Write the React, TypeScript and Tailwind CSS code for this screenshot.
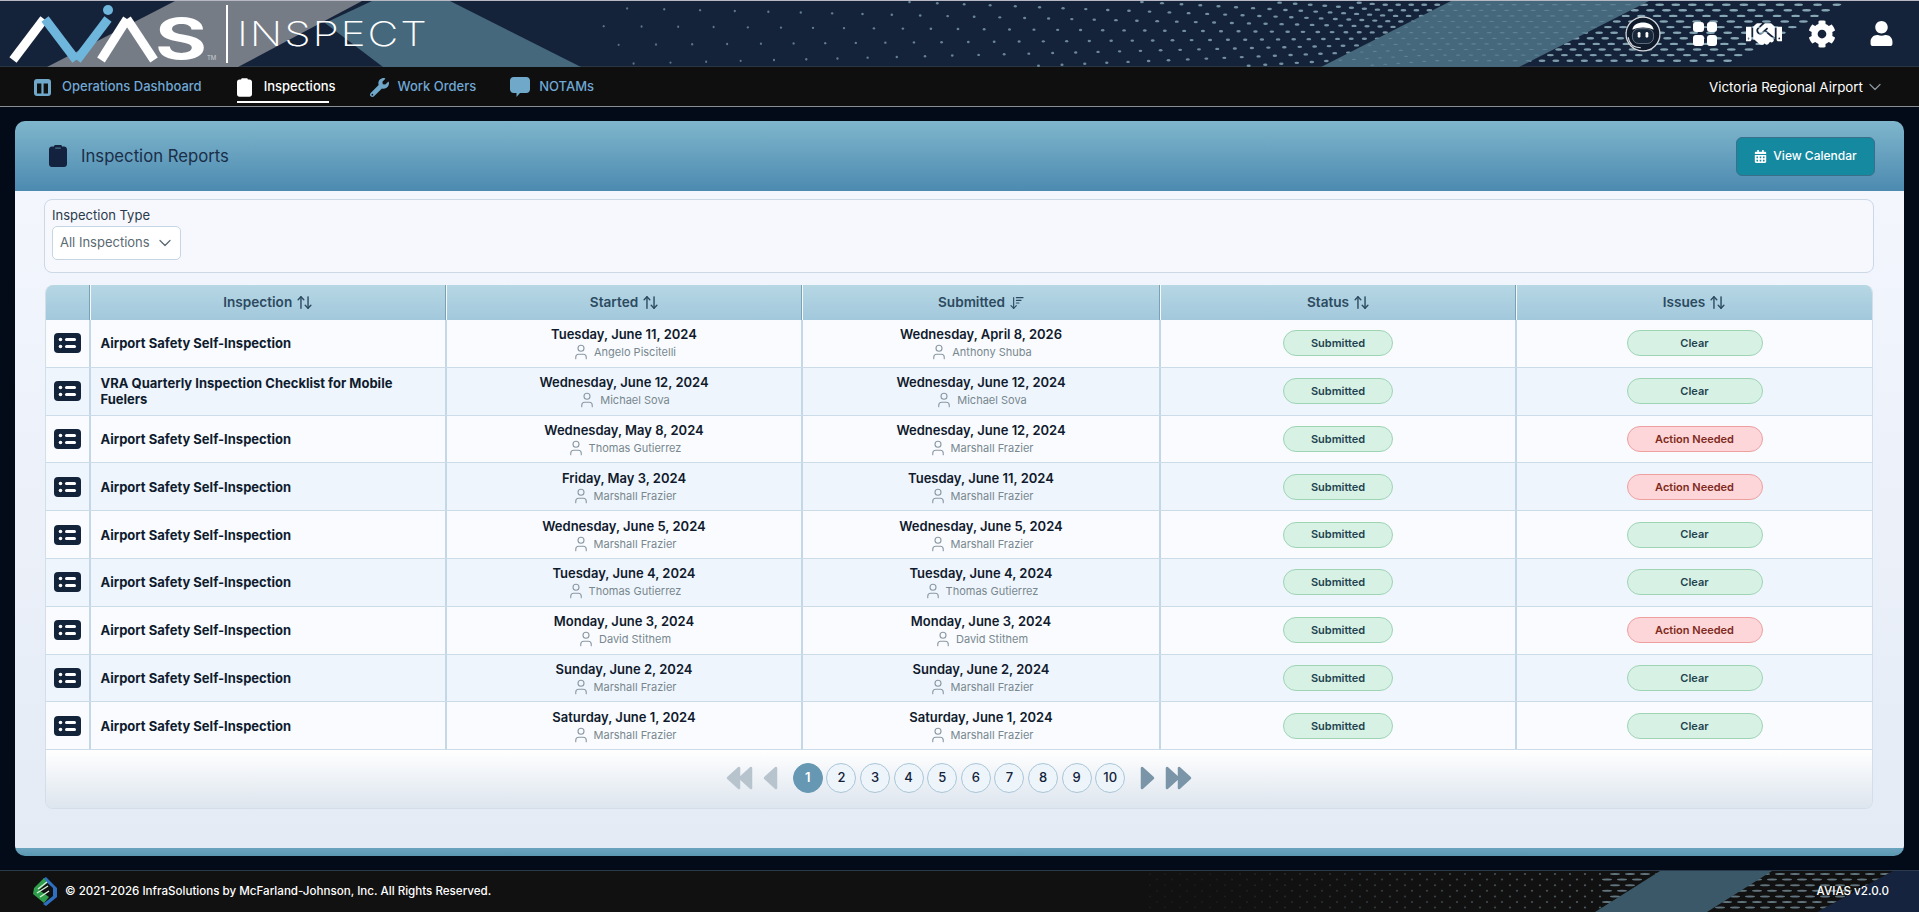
import { ArrowDownWideNarrow, ArrowUpDown, ChevronDown, User } from 'lucide-react';
import { FaCalendarAlt, FaCog, FaHandshake, FaUser, FaWrench } from 'react-icons/fa';

const rows = [
  { title: 'Airport Safety Self-Inspection', started: 'Tuesday, June 11, 2024', startedBy: 'Angelo Piscitelli', submitted: 'Wednesday, April 8, 2026', submittedBy: 'Anthony Shuba', clear: true },
  { title: 'VRA Quarterly Inspection Checklist for Mobile Fuelers', started: 'Wednesday, June 12, 2024', startedBy: 'Michael Sova', submitted: 'Wednesday, June 12, 2024', submittedBy: 'Michael Sova', clear: true },
  { title: 'Airport Safety Self-Inspection', started: 'Wednesday, May 8, 2024', startedBy: 'Thomas Gutierrez', submitted: 'Wednesday, June 12, 2024', submittedBy: 'Marshall Frazier', clear: false },
  { title: 'Airport Safety Self-Inspection', started: 'Friday, May 3, 2024', startedBy: 'Marshall Frazier', submitted: 'Tuesday, June 11, 2024', submittedBy: 'Marshall Frazier', clear: false },
  { title: 'Airport Safety Self-Inspection', started: 'Wednesday, June 5, 2024', startedBy: 'Marshall Frazier', submitted: 'Wednesday, June 5, 2024', submittedBy: 'Marshall Frazier', clear: true },
  { title: 'Airport Safety Self-Inspection', started: 'Tuesday, June 4, 2024', startedBy: 'Thomas Gutierrez', submitted: 'Tuesday, June 4, 2024', submittedBy: 'Thomas Gutierrez', clear: true },
  { title: 'Airport Safety Self-Inspection', started: 'Monday, June 3, 2024', startedBy: 'David Stithem', submitted: 'Monday, June 3, 2024', submittedBy: 'David Stithem', clear: false },
  { title: 'Airport Safety Self-Inspection', started: 'Sunday, June 2, 2024', startedBy: 'Marshall Frazier', submitted: 'Sunday, June 2, 2024', submittedBy: 'Marshall Frazier', clear: true },
  { title: 'Airport Safety Self-Inspection', started: 'Saturday, June 1, 2024', startedBy: 'Marshall Frazier', submitted: 'Saturday, June 1, 2024', submittedBy: 'Marshall Frazier', clear: true },
];

// lattice of dots in the header art, tighter and longer towards the right
const headerDots: { x: number; y: number; rx: number; o: number }[] = [];
let colX = 540;
while (colX < 1900) {
  const sp = Math.max(5.6, 19 - (colX - 600) * 0.0165);
  const step = Math.max(13, 38 - (colX - 600) * 0.033) + Math.max(0, colX - 1500) * 0.02;
  for (let r = -7; r <= 6; r++) {
    const y = 34.5 + (r + 0.5) * sp;
    if (y > 1 && y < 65) {
      const t = Math.min(1, Math.max(0, (colX - 600) / 1100));
      headerDots.push({ x: colX + r * step * 0.4, y, rx: 1 + t * t * 3.4, o: 0.6 + t * 0.4 });
    }
  }
  colX += step;
}

const footerDots: { x: number; y: number }[] = [];
for (let x = 1150; x < 1900; x += 15) {
  for (let r = 0; r < 8; r++) {
    footerDots.push({ x: x + (r % 2 ? 7 : 0), y: 3 + r * 5.6 });
  }
}

function HeaderArt() {
  return (
    <svg className="absolute inset-0" width="1919" height="66" viewBox="0 0 1919 66">
      <defs>
        <clipPath id="dots-right">
          <polygon points="600,0 1849,0 1721,66 600,66" />
        </clipPath>
        <clipPath id="dots-band">
          <polygon points="1451,0 1649,0 1519,66 1321,66" />
        </clipPath>
      </defs>
      <polygon points="175,0 362,0 238,66 47,66" fill="#767c86" />
      <polygon points="372,0 450,0 581,66 383,66 325,22" fill="#46687c" />
      <g clipPath="url(#dots-right)">
        {headerDots.map((d, i) => (
          <ellipse key={i} cx={d.x} cy={d.y} rx={d.rx} ry="1.2" fill="#86a6b4" opacity={d.o} />
        ))}
      </g>
      <polygon points="1451,0 1649,0 1519,66 1321,66" fill="#46687c" />
      <g clipPath="url(#dots-band)">
        {headerDots.map((d, i) => (
          <ellipse key={i} cx={d.x} cy={d.y} rx={d.rx * 0.8} ry=".6" fill="#5f8497" />
        ))}
      </g>
    </svg>
  );
}

function FooterArt() {
  return (
    <svg className="absolute inset-0" width="1919" height="41" viewBox="0 0 1919 41">
      <defs>
        <clipPath id="dots-footer">
          <polygon points="1100,0 1893,0 1817,41 1100,41" />
        </clipPath>
      </defs>
      <polygon points="1893,0 1919,0 1919,41 1817,41" fill="#15233e" />
      <g clipPath="url(#dots-footer)">
        {footerDots.map((d, i) => (
          <ellipse
            key={i}
            cx={d.x}
            cy={d.y}
            rx={d.x > 1600 ? 5 : 1.2}
            ry="1"
            fill="#7d97a3"
            opacity={d.x > 1600 ? 0.75 : Math.max(0.08, (d.x - 1150) / 800)}
          />
        ))}
      </g>
      <polygon points="1660,0 1772,0 1707,41 1595,41" fill="#3a5868" />
    </svg>
  );
}

function Logo() {
  return (
    <div className="relative h-[65px] w-[222px] shrink-0">
      <svg width="222" height="65" viewBox="0 0 222 65">
        <g strokeWidth="9" fill="none">
          <line x1="13" y1="59" x2="44" y2="18" stroke="#ffffff" />
          <line x1="45" y1="18" x2="76" y2="59" stroke="#6fb6dc" />
          <line x1="77" y1="59" x2="108" y2="18" stroke="#6fb6dc" />
          <line x1="101" y1="59" x2="127" y2="18" stroke="#ffffff" />
          <line x1="127" y1="18" x2="154" y2="59" stroke="#ffffff" />
        </g>
        <circle cx="108" cy="9" r="5" fill="#6fb6dc" />
      </svg>
      <span className="absolute top-[10px] left-[155px] origin-left scale-x-[1.42] text-[56px] leading-[56px] font-bold text-white">S</span>
      <span className="absolute top-[54px] left-[207px] text-[6px] leading-[6px] text-[#c9ccd2]">TM</span>
    </div>
  );
}

function RobotHead() {
  return (
    <svg width="36" height="36" viewBox="0 0 34 34">
      <circle cx="17" cy="17" r="16" fill="#0f1a2b" stroke="#d5d8dc" strokeWidth="1.2" />
      <path d="M7 13 C8 4 26 4 27 13 C21 10 13 10 7 13 Z" fill="#ffffff" />
      <rect x="7" y="12" width="20" height="14" rx="6" fill="#172638" stroke="#8e9aa6" strokeWidth="0.6" />
      <rect x="12" y="15" width="2.6" height="5.5" rx="1.3" fill="#ffffff" />
      <rect x="19.4" y="15" width="2.6" height="5.5" rx="1.3" fill="#ffffff" />
      <path d="M3 20 C4 27 9 30 15 30" fill="none" stroke="#d5d8dc" strokeWidth="1" />
    </svg>
  );
}

function GridIcon() {
  return (
    <div className="grid h-[24px] w-[24px] grid-cols-2 gap-[3px]">
      <span className="rounded-[3px] bg-white" />
      <span className="rounded-[3px] bg-white" />
      <span className="rounded-[3px] bg-white" />
      <span className="rounded-[3px] bg-white" />
    </div>
  );
}

function ClipboardIcon({ fill, notch, className }: { fill: string; notch: string; className: string }) {
  return (
    <svg viewBox="0 0 18 22" className={className}>
      <path d="M5 1.5 C5 .6 5.6 0 6.5 0 H11.5 C12.4 0 13 .6 13 1.5 H15 C16.7 1.5 18 2.8 18 4.5 V19 C18 20.7 16.7 22 15 22 H3 C1.3 22 0 20.7 0 19 V4.5 C0 2.8 1.3 1.5 3 1.5 Z" fill={fill} />
      <rect x="6" y="2.4" width="6" height="1.4" rx=".7" fill={notch} />
    </svg>
  );
}

function DashboardIcon() {
  return (
    <svg width="17" height="17" viewBox="0 0 17 17" className="shrink-0">
      <rect width="17" height="17" rx="3" fill="#6fa8c9" />
      <rect x="3" y="4.5" width="4.4" height="10" fill="#101010" />
      <rect x="9.6" y="4.5" width="4.4" height="10" fill="#101010" />
    </svg>
  );
}

function BubbleIcon() {
  return (
    <svg width="20" height="20" viewBox="0 0 20 20" className="shrink-0">
      <path d="M3.5 0 H16.5 C18.4 0 20 1.6 20 3.5 V12.5 C20 14.4 18.4 16 16.5 16 H10 L6.5 20 V16 H3.5 C1.6 16 0 14.4 0 12.5 V3.5 C0 1.6 1.6 0 3.5 0 Z" fill="#6fa8c9" />
    </svg>
  );
}

function ListIcon() {
  return (
    <svg width="27" height="20" viewBox="0 0 27 20">
      <rect width="27" height="20" rx="4" fill="#13233a" />
      <circle cx="6.5" cy="6.5" r="1.8" fill="#ffffff" />
      <circle cx="6.5" cy="13.5" r="1.8" fill="#ffffff" />
      <rect x="11" y="5" width="11" height="3" rx="1.5" fill="#ffffff" />
      <rect x="11" y="12" width="11" height="3" rx="1.5" fill="#ffffff" />
    </svg>
  );
}

function FooterLogo() {
  return (
    <svg width="24" height="29" viewBox="0 0 24 29" className="shrink-0">
      <polygon points="13,0 24,11 24,20 13,29 10,27 20,19 20,11 10,2" fill="#2f6fc0" />
      <polygon points="11,1 1,11 0,17 11,26 16,20 6,13 14,6" fill="#2e9e4a" />
      <path d="M5 12 L14 5 M4 16 L15 9 M7 20 L16 14" stroke="#d6efdc" strokeWidth="1.4" fill="none" />
    </svg>
  );
}

function Arrows({ dir, count, color }: { dir: 'left' | 'right'; count: number; color: string }) {
  const w = count === 2 ? 27 : 15;
  const shape = dir === 'left' ? '13,2 13,22 2,12' : '2,2 2,22 13,12';
  return (
    <svg width={w} height="24" viewBox={`0 0 ${w} 24`}>
      <polygon points={shape} fill={color} stroke={color} strokeWidth="2.5" strokeLinejoin="round" />
      {count === 2 && (
        <g transform="translate(12 0)">
          <polygon points={shape} fill={color} stroke={color} strokeWidth="2.5" strokeLinejoin="round" />
        </g>
      )}
    </svg>
  );
}

function HeadCell({ label, width, sorted, last }: { label: string; width: string; sorted?: boolean; last?: boolean }) {
  return (
    <div className={`${width} flex h-full items-center justify-center gap-[4px] ${last ? '' : 'border-r border-r-[#f4fafc] shadow-[inset_-1px_0_0_#7d9fb3]'}`}>
      <span className="text-[13.6px] font-semibold text-[#2c4a60]">{label}</span>
      {sorted ? (
        <ArrowDownWideNarrow size={16} strokeWidth={1.7} className="text-[#2c4a60]" />
      ) : (
        <ArrowUpDown size={17} strokeWidth={2} className="text-[#2c4a60]" />
      )}
    </div>
  );
}

function DateCell({ date, by, width }: { date: string; by: string; width: string }) {
  return (
    <div className={`${width} flex h-full flex-col items-center justify-center border-r-2 border-r-[#c3d7e6]`}>
      <span className="text-[13px] leading-[18px] font-semibold text-[#101a2c]">{date}</span>
      <span className="flex items-center gap-[4px] text-[11px] leading-[18px] text-[#78888e]">
        <User size={18} strokeWidth={1.5} className="text-[#8c99a3]" />
        {by}
      </span>
    </div>
  );
}

function Badge({ label, danger, width }: { label: string; danger?: boolean; width: string }) {
  return (
    <span
      className={`flex h-[26px] ${width} items-center justify-center rounded-full border text-[11px] font-semibold ${
        danger ? 'border-[#eea0a0] bg-[#fcd6d9] text-[#7f2a20]' : 'border-[#9ed4b4] bg-[#d7f2e5] text-[#23424f]'
      }`}
    >
      {label}
    </span>
  );
}

export default function App() {
  return (
    <div className="flex h-[912px] flex-col overflow-hidden bg-[#030a18] font-[Inter,sans-serif]">
      {/* HEADER */}
      <header className="relative flex h-[66px] shrink-0 items-center justify-between border-t border-t-[#b8b8c4] bg-[#15233a]">
        <HeaderArt />
        <div className="relative flex items-center">
          <Logo />
          <div className="ml-[4px] h-[58px] w-[2px] bg-white" />
          <span className="ml-[9px] origin-left scale-x-[1.25] pt-[1px] text-[34px] leading-none font-extralight tracking-[1.5px] text-white">INSPECT</span>
        </div>
        <div className="relative flex items-center pr-[25px]">
          <RobotHead />
          <div className="ml-[32px]">
            <GridIcon />
          </div>
          <FaHandshake className="ml-[29px] text-white" size={36} />
          <FaCog className="ml-[26px] text-white" size={28} />
          <FaUser className="ml-[33px] text-white" size={25} />
        </div>
      </header>

      {/* NAV */}
      <nav className="flex h-[41px] shrink-0 items-center justify-between border-t border-t-[#2a3644] border-b border-b-[#8b8f94] bg-[#0f0f0f] pt-[1px] pr-[34px] pl-[34px]">
        <div className="flex items-center">
          <a className="flex items-center gap-[11px] text-[13px] font-medium text-[#6fa8d6]">
            <DashboardIcon />
            Operations Dashboard
          </a>
          <a className="relative ml-[35px] flex items-center gap-[12px] text-[13px] font-medium text-white">
            <ClipboardIcon fill="#ffffff" notch="#ffffff" className="h-[19px] w-[15px]" />
            Inspections
            <span className="absolute top-[24px] left-0 h-[1.5px] w-[92px] bg-white" />
          </a>
          <a className="ml-[34px] flex items-center gap-[9px] text-[13px] font-medium text-[#6fa8d6]">
            <FaWrench size={19} className="text-[#6fa8c9]" />
            Work Orders
          </a>
          <a className="ml-[34px] flex items-center gap-[9px] text-[13px] font-medium text-[#6fa8d6]">
            <BubbleIcon />
            NOTAMs
          </a>
        </div>
        <div className="flex items-center gap-[2px] text-[13.4px] text-white">
          Victoria Regional Airport
          <ChevronDown size={20} strokeWidth={1.5} className="text-[#8a949c]" />
        </div>
      </nav>

      {/* MAIN */}
      <main className="flex min-h-0 flex-1 flex-col px-[15px] pt-[14px] pb-[14px]">
        <section className="flex min-h-0 flex-1 flex-col overflow-hidden rounded-[10px]">
          <div className="flex h-[70px] shrink-0 items-center justify-between bg-gradient-to-b from-[#7fb6cc] to-[#4c8ab0] pr-[29px] pl-[34px]">
            <div className="flex items-center gap-[14px]">
              <ClipboardIcon fill="#13233f" notch="#4c6f8c" className="h-[22px] w-[18px]" />
              <h1 className="pt-[2px] text-[16.7px] font-normal text-[#1a2e48]">Inspection Reports</h1>
            </div>
            <button className="flex h-[39px] w-[139px] items-center justify-center gap-[6px] rounded-md border border-[#3a6f8a] bg-[#14899f] text-[12px] font-medium text-white">
              <FaCalendarAlt size={13} />
              View Calendar
            </button>
          </div>

          <div className="flex min-h-0 flex-1 flex-col bg-gradient-to-b from-[#f3f6fd] to-[#e4ebf5] pt-[8px] pr-[30px] pl-[29px]">
            <div className="h-[74px] shrink-0 rounded-lg border border-[#ccd8e6] bg-[#f6f8fe] px-[7px] pt-[6px]">
              <div className="text-[13px] leading-[18px] text-[#2a3a4a]">Inspection Type</div>
              <div className="mt-[2px] flex h-[34px] w-[129px] items-center justify-between rounded-[5px] border border-[#c5d5e3] bg-white pr-[5px] pl-[7px] text-[13px] text-[#5a6a72]">
                All Inspections
                <ChevronDown size={20} strokeWidth={1.5} className="text-[#5a6a72]" />
              </div>
            </div>

            <div className="mx-px mt-[12px] overflow-hidden rounded-lg border border-[#d3deea] border-t-0">
              <div className="flex h-[35px] bg-gradient-to-b from-[#b6d7e4] to-[#a2c8dc]">
                <div className="h-full w-[44.5px] border-r border-r-[#f4fafc] shadow-[inset_-1px_0_0_#7d9fb3]" />
                <HeadCell label="Inspection" width="w-[356.5px]" />
                <HeadCell label="Started" width="w-[356px]" />
                <HeadCell label="Submitted" width="w-[358px]" sorted />
                <HeadCell label="Status" width="w-[356px]" />
                <HeadCell label="Issues" width="flex-1" last />
              </div>

              {rows.map((row, i) => (
                <div
                  key={i}
                  className={`flex h-[47.8px] items-center border-b border-b-[#ccdbe8] ${i % 2 ? 'bg-[#eff5fd]' : 'bg-[#f9fbff]'}`}
                >
                  <div className="flex h-full w-[44.5px] items-center justify-center border-r-2 border-r-[#c3d7e6]">
                    <ListIcon />
                  </div>
                  <div className="flex h-full w-[356.5px] items-center border-r-2 border-r-[#c3d7e6] pr-[40px] pl-[10px] text-[13px] leading-[16px] font-bold text-[#0f1c2e]">
                    {row.title}
                  </div>
                  <DateCell date={row.started} by={row.startedBy} width="w-[356px]" />
                  <DateCell date={row.submitted} by={row.submittedBy} width="w-[358px]" />
                  <div className="flex h-full w-[356px] items-center justify-center border-r-2 border-r-[#c3d7e6]">
                    <Badge label="Submitted" width="w-[110px]" />
                  </div>
                  <div className="flex h-full flex-1 items-center justify-center">
                    {row.clear ? <Badge label="Clear" width="w-[136px]" /> : <Badge label="Action Needed" danger width="w-[136px]" />}
                  </div>
                </div>
              ))}

              <div className="flex h-[58px] items-center justify-center bg-gradient-to-b from-white to-[#dde5ee] pb-[2px]">
                <Arrows dir="left" count={2} color="#b7c3cd" />
                <div className="ml-[10px]">
                  <Arrows dir="left" count={1} color="#b7c3cd" />
                </div>
                <div className="mr-[15px] ml-[15px] flex gap-[3.6px]">
                  {[1, 2, 3, 4, 5, 6, 7, 8, 9, 10].map((n) => (
                    <span
                      key={n}
                      className={`flex h-[30px] w-[30px] items-center justify-center rounded-full border text-[13px] ${
                        n === 1 ? 'border-[#6698b3] bg-[#6698b3] font-semibold text-white' : 'border-[#a9c6d8] bg-[#eef5fa] font-medium text-[#13233a]'
                      }`}
                    >
                      {n}
                    </span>
                  ))}
                </div>
                <Arrows dir="right" count={1} color="#7b95a8" />
                <div className="ml-[10px]">
                  <Arrows dir="right" count={2} color="#7b95a8" />
                </div>
              </div>
            </div>
          </div>

          <div className="h-[8px] shrink-0 bg-gradient-to-b from-[#6aa3bd] to-[#5c97b2]" />
        </section>
      </main>

      {/* FOOTER */}
      <footer className="relative flex h-[42px] shrink-0 items-center justify-between border-t border-t-[#2a3a4a] bg-[#111111] pr-[30px] pl-[33px]">
        <FooterArt />
        <div className="relative flex items-center gap-[8px] text-[11.6px] font-medium text-white">
          <FooterLogo />
          © 2021-2026 InfraSolutions by McFarland-Johnson, Inc. All Rights Reserved.
        </div>
        <div className="relative text-[11.6px] font-medium text-white">AVIAS v2.0.0</div>
      </footer>
    </div>
  );
}
